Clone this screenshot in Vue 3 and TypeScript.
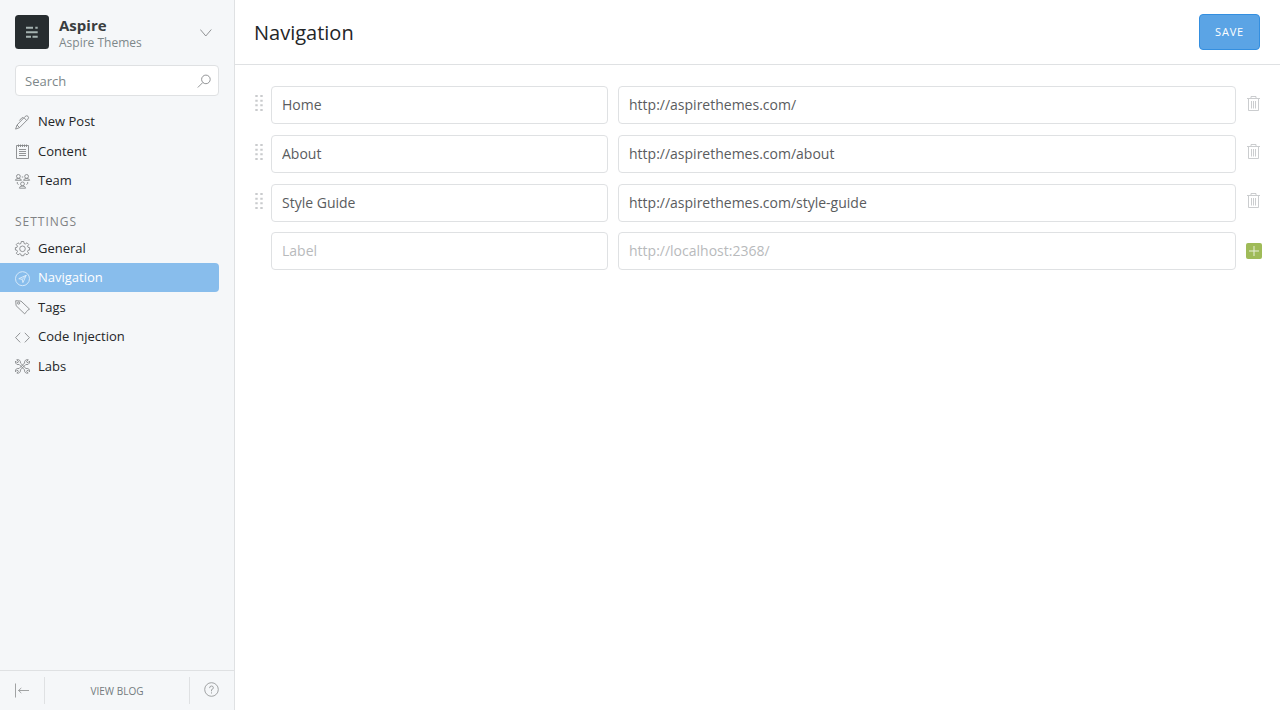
<script setup lang="ts">
import { ref } from 'vue'

interface NavEntry { icon: string; label: string }
interface LinkRow { label: string; url: string }

const mainMenu: NavEntry[] = [
  { icon: 'pen', label: 'New Post' },
  { icon: 'content', label: 'Content' },
  { icon: 'team', label: 'Team' },
]
const settingsMenu: NavEntry[] = [
  { icon: 'gear', label: 'General' },
  { icon: 'compass', label: 'Navigation' },
  { icon: 'tag', label: 'Tags' },
  { icon: 'code', label: 'Code Injection' },
  { icon: 'tools', label: 'Labs' },
]
const icons: Record<string, string> = {
  pen: 'M.6 14.1 2 10 10.1 1.5Q11.7.1 13 1.3 14.2 2.6 12.8 4.3L4.6 12.6ZM8.9 2.7l2.8 2.8M2 10l2.6 2.6M8.4 3.2 7.2 2.5 4.3 5.6',
  content: 'M1.5 1.5h12v13h-12ZM3.5.5v2.5M5.5.5v2.5M7.5.5v2.5M9.5.5v2.5M11.5.5v2.5M4 5.5h7M4 7.5h7M4 9.5h7M4 11.5h7',
  team: 'M1.5 2.4a1.9 1.9 0 1 0 3.8 0a1.9 1.9 0 1 0-3.8 0M9.7 2.4a1.9 1.9 0 1 0 3.8 0a1.9 1.9 0 1 0-3.8 0M5.6 9.9a1.9 1.9 0 1 0 3.8 0a1.9 1.9 0 1 0-3.8 0M.4 6.3Q.6 4.5 3.4 4.5T6.4 6.3ZM8.6 6.3Q8.8 4.5 11.6 4.5T14.6 6.3ZM4.4 14.2Q4.6 12 7.5 12T10.6 14.2ZM2.3 8v1.6l1.3.9M12.7 8v1.6l-1.3.9M6.8 3h1.4',
  gear: 'M6.3.5h2.4l.4 2 1.2.5 1.7-1.2 1.7 1.7L12.5 5.2l.5 1.1 1.6.3v2.4l-1.6.3-.5 1.2 1.2 1.7-1.7 1.7-1.7-1.2-1.2.5-.4 1.5H6.3l-.4-1.5-1.2-.5L3 13.9l-1.7-1.7 1.2-1.7L2 9.3.4 9V6.6L2 6.3l.5-1.1L1.3 3.5 3 1.8 4.7 3l1.2-.5ZM4.7 7.8a2.8 2.8 0 1 0 5.6 0a2.8 2.8 0 1 0-5.6 0',
  compass: 'M.5 7.7a7 7 0 1 0 14 0a7 7 0 1 0-14 0M11.2 4.3 3.8 7.7l3.4.6.7 3.3ZM11.2 4.3l-4 4',
  tag: 'M.7.7 6 1.1l8.5 8-2 1.3-1 1.2-1.8 2.3L1.1 5.7ZM2.5 3.1a1.1 1.1 0 1 0 2.2 0a1.1 1.1 0 1 0-2.2 0',
  code: 'M5.2 2.8.6 7.6l4.6 4.8M9.8 2.8l4.6 4.8-4.6 4.8',
  tools: 'M1.7.8 3.4 2.3 3.1 3.3 2 3.6.5 2.1Q.1 4.4 1.8 5.3 3 5.8 4.1 5.4L9.6 10.9Q9.2 12.4 10.3 13.5 11.5 14.6 13.2 14.1L11.7 12.6 12 11.6 13 11.3 14.5 12.8Q14.9 10.8 13.5 9.8 12.3 9.2 11 9.6L5.4 4Q5.7 2.3 4.5 1.2 3.2.3 1.7.8ZM13.3.8 11.6 2.3 11.9 3.3 13 3.6 14.5 2.1Q14.9 4.4 13.2 5.3 12 5.8 10.9 5.4L5.4 10.9Q5.8 12.4 4.7 13.5 3.5 14.6 1.8 14.1L3.3 12.6 3 11.6 2 11.3.5 12.8Q.1 10.8 1.5 9.8 2.7 9.2 4 9.6L9.6 4Q9.3 2.3 10.5 1.2 11.8.3 13.3.8Z',
}
const active = ref('Navigation')
const links = ref<LinkRow[]>([
  { label: 'Home', url: 'http://aspirethemes.com/' },
  { label: 'About', url: 'http://aspirethemes.com/about' },
  { label: 'Style Guide', url: 'http://aspirethemes.com/style-guide' },
])
const draft = ref<LinkRow>({ label: '', url: '' })

function addLink() {
  if (!draft.value.label) return
  links.value.push({ ...draft.value })
  draft.value = { label: '', url: '' }
}
</script>

<template>
  <div class="app">
    <aside class="sidebar">
      <header class="brand">
        <svg class="logo" viewBox="0 0 34 34">
          <rect width="34" height="34" rx="3.5" fill="#272d30" />
          <path d="M11 12.7h7M20.3 12.7h2.4M11 17.2h11.7M11 21.7h5M17.5 21.7h5.2" fill="none" stroke="#a5b3b1" stroke-width="2" />
        </svg>
        <div class="brand-text">
          <strong>Aspire</strong>
          <span>Aspire Themes</span>
        </div>
        <svg class="chevron" viewBox="0 0 12 8"><path d="M.3.5 5.8 7 11.3.5" /></svg>
      </header>
      <div class="search">
        <input placeholder="Search" />
        <svg viewBox="0 0 14 14"><circle cx="8.9" cy="5.4" r="4.3" /><path d="M5.8 8.5.8 13.5" /></svg>
      </div>
      <nav class="menu">
        <a v-for="item in mainMenu" :key="item.label" class="item">
          <svg viewBox="0 0 15 15"><path :d="icons[item.icon]" /></svg>{{ item.label }}
        </a>
      </nav>
      <h2>SETTINGS</h2>
      <nav class="menu">
        <a v-for="item in settingsMenu" :key="item.label" class="item" :class="{ active: item.label === active }" @click="active = item.label">
          <svg viewBox="0 0 15 15"><path :d="icons[item.icon]" /></svg>{{ item.label }}
        </a>
      </nav>
      <footer class="foot">
        <a class="side"><svg viewBox="0 0 15 15"><path d="M.5.5v14M14 7.5H3.5M6.3 5 3.5 7.5 6.3 10" /></svg></a>
        <a class="blog">VIEW BLOG</a>
        <a class="side help"><svg viewBox="0 0 15 15"><circle cx="7.5" cy="7.5" r="6.8" /><path d="M5.6 6.1Q5.6 4 7.5 4T9.4 5.9Q9.4 7 7.5 7.7v1.6M7.5 10.3v1.2" /></svg></a>
      </footer>
    </aside>
    <main class="main">
      <header class="topbar">
        <h1>Navigation</h1>
        <button class="save">SAVE</button>
      </header>
      <section class="rows">
        <div v-for="(link, i) in links" :key="i" class="row">
          <svg class="grip" viewBox="0 0 8 17">
            <path d="M.3 1h2.4M5.3 1h2.4M.3 5.7h2.4M5.3 5.7h2.4M.3 10.3h2.4M5.3 10.3h2.4M.3 15h2.4M5.3 15h2.4" />
          </svg>
          <input v-model="link.label" class="label" />
          <input v-model="link.url" class="url" />
          <button class="remove" @click="links.splice(i, 1)">
            <svg viewBox="0 0 13 15"><path d="M0 2.5h13M4 2V.5h5V2M1.5 3v11.5h10V3M4.5 5v7.5M6.5 5v7.5M8.5 5v7.5" /></svg>
          </button>
        </div>
        <div class="row">
          <span class="grip"></span>
          <input v-model="draft.label" class="label" placeholder="Label" />
          <input v-model="draft.url" class="url" placeholder="http://localhost:2368/" />
          <button class="add" @click="addLink">
            <svg viewBox="0 0 16 16"><path d="M8 3v10M3 8h10" /></svg>
          </button>
        </div>
      </section>
    </main>
  </div>
</template>

<style>
body { margin: 0; }
</style>

<style scoped>
.app { display: flex; height: 710px; background: #fff; color: #242628; font-family: "Open Sans", sans-serif; font-size: 13px; }
.app * { box-sizing: border-box; }
input, button { font-family: inherit; outline: 0; }
svg { display: block; flex: none; fill: none; stroke: #808284; stroke-width: .85; }
.sidebar { display: flex; flex-direction: column; width: 235px; flex: none; border-right: 1px solid #dfe1e3; background: #f5f7f9; }
.brand { display: flex; align-items: center; height: 65px; padding: 0 22px 1px 15px; }
.logo { width: 34px; height: 34px; stroke: none; }
.brand-text { display: flex; flex-direction: column; flex: 1; margin-left: 10px; padding-top: 2px; }
.brand-text strong { font-size: 15px; line-height: 19px; color: #3a3d3f; }
.brand-text span { font-size: 12px; line-height: 15px; color: #7d878a; }
.chevron { width: 12px; height: 8px; margin-top: 1px; }
.search { display: flex; align-items: center; width: 204px; height: 31px; margin-left: 15px; padding: 0 7px 0 9px; border: 1px solid #dfe1e3; border-radius: 4px; background: #fff; }
.search input { flex: 1; min-width: 0; padding: 0; border: 0; background: none; font-size: 13px; }
.search input::placeholder { color: #7d878a; opacity: 1; }
.search svg { width: 14px; height: 14px; }
.menu { display: flex; flex-direction: column; }
.search + .menu { margin-top: 11px; }
.item { display: flex; align-items: center; gap: 8px; width: 219px; height: 29.45px; padding-left: 15px; padding-bottom: 1px; border-radius: 0 4px 4px 0; cursor: pointer; }
.item svg { width: 15px; height: 15px; margin-top: 2px; overflow: visible; }
.item.active { background: #88bdec; color: #fff; }
.item.active svg { stroke: #e2f0fc; }
h2 { margin: 19px 0 3.3px 15px; font-size: 12px; line-height: 16px; font-weight: 400; letter-spacing: 1px; color: #808284; }
.foot { display: flex; align-items: center; height: 40px; margin-top: auto; border-top: 1px solid #dfe1e3; }
.foot .side { display: flex; align-items: center; justify-content: center; width: 44px; height: 27px; }
.foot .help { padding: 0 1px 2px 0; }
.foot svg { width: 15px; height: 15px; stroke: #919395; }
.foot .blog { flex: 1; height: 27px; padding-top: 1px; border: solid #dfe1e3; border-width: 0 1px; font-size: 10px; line-height: 27px; text-align: center; color: #737b7e; }
.main { flex: 1; min-width: 0; }
.topbar { display: flex; align-items: center; justify-content: space-between; height: 65px; padding: 0 20px 0 19px; border-bottom: 1px solid #dfe1e3; }
h1 { margin: 0; padding-top: 1px; font-size: 20px; line-height: 26px; font-weight: 400; }
.save { width: 61px; height: 36px; padding: 0 0 1px; border: 1px solid #348fe0; border-radius: 4px; background: #5ba4e5; color: #fff; font-size: 11px; letter-spacing: .8px; }
.rows { display: flex; flex-direction: column; gap: 10.8px; padding: 21px 18px 0 20px; }
.row { display: flex; align-items: center; height: 38px; }
.grip { width: 8px; height: 17px; margin: 0 8px 3px 0; stroke: #c9cbcd; stroke-width: 2; }
.row input { height: 38px; padding: 0 10px 1px; border: 1px solid #dfe1e3; border-radius: 4px; color: #5a5c5e; background: #fff; font-size: 14px; }
.row input::placeholder { color: #b8babc; opacity: 1; }
.label { width: 337px; margin-right: 10px; }
.url { flex: 1; min-width: 0; margin-right: 10px; }
.remove, .add { display: flex; width: 16px; height: 16px; padding: 0; border: 0; background: none; }
.remove { margin-bottom: 3px; padding-left: .5px; }
.remove svg { width: 13px; height: 15px; stroke: #c2c4c6; }
.add { border-radius: 2px; background: #9fbb58; }
.add svg { width: 16px; height: 16px; stroke: #e9f0da; stroke-width: 1; }
</style>
